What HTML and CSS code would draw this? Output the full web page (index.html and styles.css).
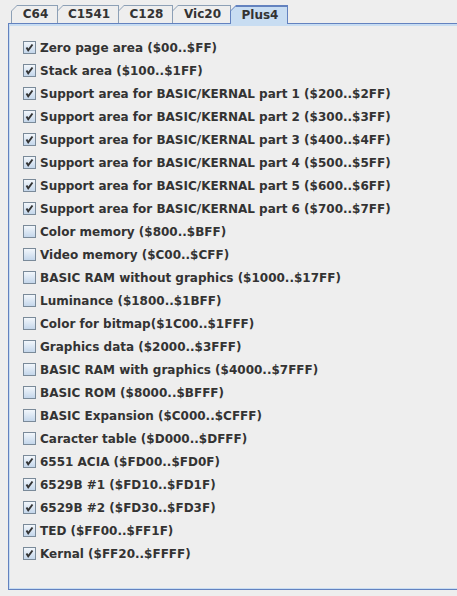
FILE: index.html
```html
<!DOCTYPE html>
<html>
<head>
<meta charset="utf-8">
<link rel="stylesheet" href="styles.css">
</head>
<body>
<svg width="0" height="0" class="defs">
  <defs>
    <linearGradient id="g" x1="0" y1="0" x2="0" y2="1">
      <stop offset="0" stop-color="#f4f8fc"/>
      <stop offset="1" stop-color="#c2d5ea"/>
    </linearGradient>
    <symbol id="box" viewBox="0 0 13 13">
      <rect x="0.5" y="0.5" width="12" height="12" fill="url(#g)" stroke="#7a8a99"/>
    </symbol>
    <symbol id="chk" viewBox="0 0 13 13">
      <rect x="0.5" y="0.5" width="12" height="12" fill="url(#g)" stroke="#7a8a99"/>
      <path d="M3.5 6.5 L5.2 9.3 L9.5 3.5" fill="none" stroke="#333" stroke-width="1.9"/>
    </symbol>
  </defs>
</svg>
<div class="tabs">
  <div class="tab t1"><span class="in">C64</span></div>
  <div class="tab t2"><span class="in">C1541</span></div>
  <div class="tab t3"><span class="in">C128</span></div>
  <div class="tab t4"><span class="in">Vic20</span></div>
  <div class="tab t5 sel"><span class="in">Plus4</span></div>
</div>
<div class="pane">
  <ul class="list">
    <li><svg class="cb"><use href="#chk"/></svg>Zero page area ($00..$FF)</li>
    <li><svg class="cb"><use href="#chk"/></svg>Stack area ($100..$1FF)</li>
    <li><svg class="cb"><use href="#chk"/></svg>Support area for BASIC/KERNAL part 1 ($200..$2FF)</li>
    <li><svg class="cb"><use href="#chk"/></svg>Support area for BASIC/KERNAL part 2 ($300..$3FF)</li>
    <li><svg class="cb"><use href="#chk"/></svg>Support area for BASIC/KERNAL part 3 ($400..$4FF)</li>
    <li><svg class="cb"><use href="#chk"/></svg>Support area for BASIC/KERNAL part 4 ($500..$5FF)</li>
    <li><svg class="cb"><use href="#chk"/></svg>Support area for BASIC/KERNAL part 5 ($600..$6FF)</li>
    <li><svg class="cb"><use href="#chk"/></svg>Support area for BASIC/KERNAL part 6 ($700..$7FF)</li>
    <li><svg class="cb"><use href="#box"/></svg>Color memory ($800..$BFF)</li>
    <li><svg class="cb"><use href="#box"/></svg>Video memory ($C00..$CFF)</li>
    <li><svg class="cb"><use href="#box"/></svg>BASIC RAM without graphics ($1000..$17FF)</li>
    <li><svg class="cb"><use href="#box"/></svg>Luminance ($1800..$1BFF)</li>
    <li><svg class="cb"><use href="#box"/></svg>Color for bitmap($1C00..$1FFF)</li>
    <li><svg class="cb"><use href="#box"/></svg>Graphics data ($2000..$3FFF)</li>
    <li><svg class="cb"><use href="#box"/></svg>BASIC RAM with graphics ($4000..$7FFF)</li>
    <li><svg class="cb"><use href="#box"/></svg>BASIC ROM ($8000..$BFFF)</li>
    <li><svg class="cb"><use href="#box"/></svg>BASIC Expansion ($C000..$CFFF)</li>
    <li><svg class="cb"><use href="#box"/></svg>Caracter table ($D000..$DFFF)</li>
    <li><svg class="cb"><use href="#chk"/></svg>6551 ACIA ($FD00..$FD0F)</li>
    <li><svg class="cb"><use href="#chk"/></svg>6529B #1 ($FD10..$FD1F)</li>
    <li><svg class="cb"><use href="#chk"/></svg>6529B #2 ($FD30..$FD3F)</li>
    <li><svg class="cb"><use href="#chk"/></svg>TED ($FF00..$FF1F)</li>
    <li><svg class="cb"><use href="#chk"/></svg>Kernal ($FF20..$FFFF)</li>
  </ul>
</div>
</body>
</html>
```

FILE: styles.css
```css
html, body {
  margin: 0;
  padding: 0;
  background: #eeeeee;
}
body {
  font-family: "DejaVu Sans", sans-serif;
  font-weight: bold;
  font-size: 12px;
  color: #333333;
  width: 457px;
  height: 596px;
  overflow: hidden;
}
.defs {
  position: absolute;
}
.tabs {
  display: flex;
  padding: 5px 0 0 11px;
  height: 18px;
}
.tab {
  height: 18px;
  background: #8da0b6;
  clip-path: polygon(6px 0, 100% 0, 100% 100%, 0 100%, 0 6px);
  padding: 1px 1px 0 1px;
  box-sizing: border-box;
  margin-left: -1px;
}
.tab:first-child {
  margin-left: 0;
}
.t1 { width: 47px; }
.t2 { width: 62px; }
.t3 { width: 55px; }
.t4 { width: 59px; }
.t5 { width: 58px; }
.in {
  display: flex;
  align-items: center;
  justify-content: center;
  height: 17px;
  background: #eeeeee;
  clip-path: polygon(5px 0, 100% 0, 100% 100%, 0 100%, 0 5px);
  padding-left: 2px;
  line-height: 17px;
}
.tab.sel {
  background: #6382bf;
  height: 19px;
  position: relative;
  z-index: 1;
}
.tab.sel .in {
  background: #c8ddf2;
  height: 18px;
  box-shadow: inset 0 1px 0 #6382bf;
  padding-top: 1px;
  box-sizing: border-box;
}
.pane {
  margin-left: 8px;
  height: 567px;
  box-sizing: border-box;
  border-top: 1px solid #6382bf;
  border-left: 1px solid #6382bf;
  border-bottom: 1px solid #6382bf;
  box-shadow: inset 1px 2px 0 #c8ddf2, inset 0 -1px 0 #c8ddf2;
}
.list {
  list-style: none;
  margin: 0;
  padding: 12px 0 0 14px;
}
.list li {
  display: flex;
  align-items: center;
  height: 23px;
  white-space: nowrap;
}
.cb {
  width: 13px;
  height: 13px;
  flex: none;
  margin-right: 4px;
}
```
